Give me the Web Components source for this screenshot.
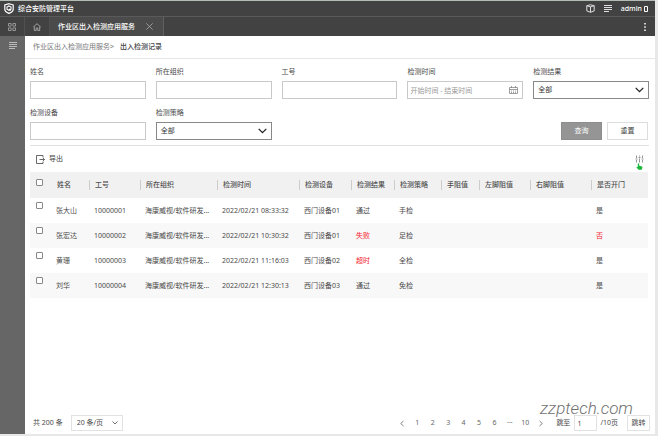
<!DOCTYPE html>
<html lang="zh-CN">
<head>
<meta charset="utf-8">
<title>综合安防管理平台</title>
<style>
  html { height: 100%; }
  body { margin: 0; min-height: 100%; display: flex; background: #e8e8e8; color: #4a4a4a;
    font: 7px/10px "Noto Sans", "Noto Sans CJK SC", sans-serif; }
</style>
</head>
<body>
<security-app></security-app>
<script>
const base = `*{box-sizing:border-box} button,input,select{font:inherit;color:inherit;margin:0;border-radius:0}
  button{background:none;border:0;padding:0;cursor:pointer} svg{display:block;fill:none;stroke:currentColor} a{color:inherit;text-decoration:none}`;
function define(name, css, html) {
  customElements.define(name, class extends HTMLElement {
    constructor() {
      super();
      const root = this.attachShadow({ mode: 'open' });
      root.innerHTML = `<style>${base}${css}</style>` + (typeof html === 'string' ? html : '');
      this.build = typeof html === 'function' ? html : null;
    }
    connectedCallback() {
      if (this.build && !this.ready) { this.ready = true; this.shadowRoot.innerHTML += this.build(this); }
    }
  });
}

define('app-header', `
  :host{display:flex;align-items:center;height:17px;padding:0 7px 0 4px;background:#424242;color:#fff;border-top:1px solid #b4bab4;border-bottom:1px solid #5a5a5a}
  h1{font-size:7px;line-height:10px;font-weight:500;margin:0 auto 0 4px}
  .tools{display:flex;align-items:center;gap:9px;color:#ddd}
  .user{display:flex;align-items:center;gap:2px;color:#fff;font-weight:500}`, `
  <svg width="10" height="11" viewBox="0 0 10 11"><path d="M5 .7 9.2 2v4.2C9.2 8 7.300 9.500 5 10.400 2.700 9.500.8 8 .8 6.200V2z" stroke-width="1.200"/><path d="M5 2.900 7 4v2.200L5 7.300 3 6.200V4zM5.200 5.800 7 7.400" stroke-width="1.100"/></svg>
  <h1>综合安防管理平台</h1>
  <div class="tools">
    <button aria-label="组件"><svg width="9" height="9" viewBox="0 0 9 9"><path d="M.8 1.700 4.500.8l3.700.9v5.200L4.500 8.300.8 6.900zM.8 1.700l3.700 1.200 3.700-1.200M4.500 2.900v5.400"/></svg></button>
    <button aria-label="列表"><svg width="8" height="8" viewBox="0 0 8 8"><path d="M0 .5h8M0 2.500h8M0 4.500h8M0 6.500h5"/></svg></button>
    <button class="user">admin<svg width="4" height="6" viewBox="0 0 4 6"><path d="M.5.5h3v5h-3z"/></svg></button>
  </div>`);

define('tab-bar', `
  :host{display:flex;height:19px;background:#424242;color:#aaa}
  button{display:flex;align-items:center;justify-content:center}
  .grid,.home{width:25px;border-right:1px solid #505050}
  .tab{display:flex;align-items:center;gap:11px;background:#4b4b4b;color:#fff;padding:0 10px 0 8px;border-right:1px solid #606060}
  .tab a{font-weight:500}.tab button{color:#aaa}
  .more{margin-left:auto;width:21px;color:#fff}`, `
  <button class="grid" aria-label="菜单"><svg width="8" height="8" viewBox="0 0 8 8"><path d="M.5.5h2.600v2.600H.5zM4.900.5h2.600v2.600H4.900zM.5 4.900h2.600v2.600H.5zM4.900 4.900h2.600v2.600H4.900z" stroke-width=".8"/></svg></button>
  <button class="home" aria-label="首页"><svg width="8" height="8" viewBox="0 0 8 8"><path d="M.3 4 4 .7 7.700 4M1.300 3.500v4h1.900v-2.500h1.600v2.500h1.900v-4" stroke-width=".9"/></svg></button>
  <div class="tab"><a href="#">作业区出入检测应用服务</a>
  <button aria-label="关闭"><svg width="7" height="7" viewBox="0 0 7 7"><path d="M.3.3l6.400 6.400M6.700.3.3 6.700" stroke-width=".8"/></svg></button></div>
  <button class="more" aria-label="更多"><svg width="2" height="8" viewBox="0 0 2 8"><path d="M1 0v1.500M1 3.200v1.500M1 6.400v1.500" stroke-width="1.500"/></svg></button>`);

define('side-rail', `
  :host{display:flex;flex-direction:column;align-items:center;width:25px;flex:none;background:#666;color:#bbb;padding-top:6px}`,
  `<button aria-label="展开导航"><svg width="8" height="8" viewBox="0 0 8 8"><path d="M0 .5h8M0 2.500h8M0 4.500h8M0 6.500h6"/></svg></button>`);

define('bread-crumb', `
  :host{display:flex;align-items:center;height:23px;padding:0 8px;border-bottom:1px solid #e6e6e6;color:#777}
  b{font-weight:500;color:#444;margin-left:6px}`,
  `<a href="#">作业区出入检测应用服务</a>&gt;<b>出入检测记录</b>`);

define('form-field', `
  :host{display:flex;flex-direction:column;gap:4px;min-width:0}
  .box{display:grid;align-items:center}
  .box>*{grid-area:1/1}
  input,select{width:100%;height:18px;border:1px solid #c9c9c9;background:#fff;padding:0 4px 0 2px;outline:0;appearance:none}
  select{border-color:#888;padding-left:4px;color:#333}
  input::placeholder{color:#999;opacity:1}
  svg{justify-self:end;margin-right:5px;pointer-events:none;color:#222}
  .cal{color:#888}`,
  el => {
    const t = el.getAttribute('type');
    const label = `<label for="c">${el.getAttribute('label')}</label>`;
    if (t === 'select') return `${label}<div class="box"><select id="c"><option>全部</option></select><svg width="9" height="6" viewBox="0 0 9 6"><path d="M.7.900 4.500 4.700 8.300.900" stroke-width="1.300"/></svg></div>`;
    if (t === 'range') return `${label}<div class="box"><input id="c" placeholder="开始时间 - 结束时间"><svg class="cal" width="9" height="8" viewBox="0 0 9 8"><path d="M.5 1.500h8v6h-8zM.5 3.500h8M2.500 0v2M6.500 0v2M2 5h1M4 5h1M6 5h1M2 6.500h1M4 6.500h1M6 6.500h1" stroke-width=".8"/></svg></div>`;
    return `${label}<div class="box"><input id="c"></div>`;
  });

define('action-button', `
  :host{display:block}
  button{display:block;width:41px;height:18px;border:1px solid #ddd;background:#fff;color:#444}
  :host([primary]) button{background:#959595;border-color:#8d8d8d;color:#fff}`,
  `<button type="button"><slot></slot></button>`);

define('search-form', `
  :host{display:grid;grid-template-columns:repeat(5,minmax(0,1fr));gap:9px 10px;padding:8px 0 5px;border-bottom:1px solid #e2e2e2;margin:0 6px 0 5px}
  .actions{grid-column:5;display:flex;justify-content:flex-end;align-items:flex-end;gap:5px;padding-right:1px}`, `
  <form-field label="姓名"></form-field><form-field label="所在组织"></form-field><form-field label="工号"></form-field>
  <form-field label="检测时间" type="range"></form-field><form-field label="检测结果" type="select"></form-field>
  <form-field label="检测设备"></form-field><form-field label="检测策略" type="select"></form-field>
  <div class="actions"><action-button primary>查询</action-button><action-button>重置</action-button></div>`);

define('table-toolbar', `
  :host{display:flex;align-items:center;justify-content:space-between;height:26px;padding:0 11px}
  button{display:flex;align-items:center;gap:4px;color:#444}
  .set{position:relative;color:#777}
  .hand{position:absolute;left:1px;top:8px;color:#18b83c;fill:currentColor;stroke:none}`, `
  <button><svg width="9" height="9" viewBox="0 0 9 9"><path d="M7 2.500V.5H.5v8H7v-2M3.500 4.500h5M7 3l1.500 1.500L7 6" stroke-width=".8"/></svg>导出</button>
  <button class="set" aria-label="列设置"><svg width="9" height="8" viewBox="0 0 9 8"><path d="M1.500 .5v2.500M1.500 5v2.500M4.500 .5v1M4.500 3.500v4M7.500 .5v2.500M7.500 5v2.500M.5 4h2M3.500 2.500h2M6.500 4h2" stroke-width=".8"/></svg>
  <svg class="hand" width="7" height="7" viewBox="0 0 7 7"><path d="M1.800.7Q2.500-.3 3.200.7V2.800L6 3.400Q6.600 3.600 6.400 4.400L5.800 6.700H2.500L.4 4.200Q.6 3.500 1.800 4.100z"/></svg></button>`);

const heads = ['姓名','工号','所在组织','检测时间','检测设备','检测结果','检测策略','手阻值','左脚阻值','右脚阻值','是否开门'];
const people = [
  ['张大山','10000001','2022/02/21 08:33:32','西门设备01','通过','手检','是'],
  ['张宏达','10000002','2022/02/21 10:30:32','西门设备01','失败','足检','否'],
  ['黄珊','10000003','2022/02/21 11:16:03','西门设备02','超时','全检','是'],
  ['刘华','10000004','2022/02/21 12:30:13','西门设备03','通过','免检','是']];
const bad = new Set(['失败','超时','否']);
define('record-table', `
  :host{display:block;margin:0 7px 0 5px}
  table{width:100%;table-layout:fixed;border-collapse:collapse}
  th,td{padding:0 0 0 5px;height:25px;text-align:left;font-weight:400;white-space:nowrap}
  th{height:26px;background:#f1f1f1;color:#505050;font-weight:500}
  th span{display:block;margin-left:-5px;padding-left:5px;border-left:1px solid #ccc}
  th:nth-child(2) span{border-color:transparent}
  tbody tr:nth-child(even){background:#f8f8f8}
  .bad{color:#f5222d}
  .pick{vertical-align:top;padding:7px 0 0 6px}
  tbody .pick{padding-top:4px}
  input{appearance:none;display:block;width:7px;height:7px;border:1px solid #888;border-radius:1px;background:#fff;margin:0}`,
  () => `<table><colgroup>${[21,38,51,77,82,52,43,47,38,51,61,57].map(w => `<col style="width:${w}px">`).join('')}</colgroup>
  <thead><tr><th class="pick"><input type="checkbox" aria-label="全选"></th>${heads.map(h => `<th><span>${h}</span></th>`).join('')}</tr></thead>
  <tbody>${people.map(([n, id, ...r]) => {
    const cells = [n, id, '海康威视/软件研发...', ...r.slice(0, 4), '', '', '', r[4]];
    return `<tr><td class="pick"><input type="checkbox" aria-label="选择${n}"></td>${cells.map(c => `<td${bad.has(c) ? ' class="bad"' : ''}>${c}</td>`).join('')}</tr>`;
  }).join('')}</tbody></table>`);

define('pager-bar', `
  :host{display:flex;align-items:center;margin-top:auto;padding:0 5px 3px 8px;position:relative;white-space:nowrap}
  .size{display:grid;align-items:center;width:52px;margin:0 auto 0 8px}
  .size>*{grid-area:1/1}
  select,input,.go{height:16px;border:1px solid #e2e2e2;background:#fff;outline:0}
  select{appearance:none;padding:0 5px;width:100%}
  .size svg{justify-self:end;margin-right:5px;pointer-events:none}
  nav{display:flex;justify-content:space-between;width:154px;margin-right:8px}
  nav button{width:15px;height:16px;display:flex;align-items:center;justify-content:center;color:#666}
  label{margin-right:4px}
  input{width:23px;padding:0 2px;margin-right:3px}
  .go{width:23px;margin-left:9px}
  .mark{position:absolute;right:22px;bottom:16px;font:italic 300 17px/20px Roboto,sans-serif;color:#707070;pointer-events:none}`, `
  <span>共 200 条</span>
  <div class="size"><select aria-label="每页条数"><option>20 条/页</option></select><svg width="6" height="4" viewBox="0 0 6 4"><path d="M.5.5 3 3 5.500.5" stroke-width=".8"/></svg></div>
  <nav aria-label="分页"><button aria-label="上一页"><svg width="4" height="7" viewBox="0 0 4 7"><path d="M3.500 1 .7 3.500 3.500 6" stroke-width=".8"/></svg></button>
  <button>1</button><button>2</button><button>3</button><button>4</button><button>5</button><button>6</button><button>···</button><button>10</button>
  <button aria-label="下一页"><svg width="4" height="7" viewBox="0 0 4 7"><path d="M.5 1 3.300 3.500.5 6" stroke-width=".8"/></svg></button></nav>
  <label for="p">跳至</label><input id="p" value="1"><span>/10页</span><button class="go">跳转</button>
  <span class="mark">zzptech.com</span>`);

define('security-app', `
  :host{display:flex;flex-direction:column;flex:1;min-width:0;margin:0 3px 2px 0}
  .body{display:flex;flex:1}
  main{display:flex;flex-direction:column;flex:1;min-width:0;background:#fff}`, `
  <app-header></app-header><tab-bar></tab-bar>
  <div class="body"><side-rail></side-rail>
  <main><bread-crumb></bread-crumb><search-form></search-form><table-toolbar></table-toolbar><record-table></record-table><pager-bar></pager-bar></main></div>`);
</script>
</body>
</html>
